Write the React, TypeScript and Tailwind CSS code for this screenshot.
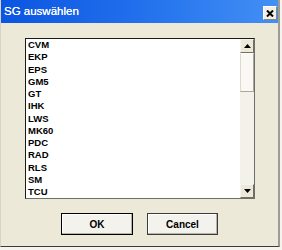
const items = ['CVM', 'EKP', 'EPS', 'GM5', 'GT', 'IHK', 'LWS', 'MK60', 'PDC', 'RAD', 'RLS', 'SM', 'TCU'];

function Arrow({ up }: { up?: boolean }) {
  return (
    <svg width="7" height="4" viewBox="0 0 7 4" className="block">
      <path d={up ? 'M3.5 0 L7 4 L0 4 Z' : 'M0 0 L7 0 L3.5 4 Z'} fill="#000" />
    </svg>
  );
}

function ScrollButton({ up }: { up?: boolean }) {
  return (
    <div className="h-[14px] w-full flex items-center justify-center bg-[#ece9d8] border border-t-[#f4f3ee] border-l-[#f4f3ee] border-r-[#716f64] border-b-[#716f64]">
      <Arrow up={up} />
    </div>
  );
}

function Button({ label, primary }: { label: string; primary?: boolean }) {
  return (
    <button
      className={
        'h-[22px] flex items-center justify-center bg-[#f3f2ec] text-black font-bold text-[10px] shadow-[inset_-1px_-1px_0_#b5b3a8,inset_1px_1px_0_#ffffff] border ' +
        (primary ? 'w-[72px] border-black' : 'w-[71px] border-[#3c3c3c]')
      }
    >
      {label}
    </button>
  );
}

export default function App() {
  return (
    <div className="w-[282px] h-[250px] bg-[#f4f3ee] font-['Liberation_Sans',Arial,sans-serif]">
      <div className="w-[280px] h-[247px] flex flex-col bg-[#ece9d8] border-l border-l-[#d8d4c4] border-r-2 border-r-[#9d9b92] border-b border-b-[#3c3c3c]">
        <div className="h-[23px] flex items-start justify-between bg-gradient-to-r from-[#0a55e2] via-[#2270ec] to-[#428ff5]">
          <span className="pl-[3px] pt-[5px] text-white text-[11.5px] leading-[12px] [text-shadow:0_0_0.4px_#fff]">SG auswählen</span>
          <div className="mt-[6px] mr-[1px] w-[14px] h-[14px] flex items-center justify-center bg-[#f1efe6] border border-[#ffffff] border-r-[#8a887e] border-b-[#8a887e]">
            <svg width="8" height="7" viewBox="0 0 8 7">
              <path d="M1 0.5 L7 6.5 M7 0.5 L1 6.5" stroke="#000" strokeWidth="2" />
            </svg>
          </div>
        </div>

        <div className="mt-[15px] ml-[24px] w-[230px] h-[161px] flex bg-white border border-t-[#1a1a1a] border-l-[#1a1a1a] border-r-[#6e6e6a] border-b-[#6e6e6a]">
          <ul className="flex-1 pl-[2px] text-[9.5px] font-bold text-black leading-[12.25px]">
            {items.map((it) => (
              <li key={it}>{it}</li>
            ))}
          </ul>
          <div className="w-[14px] flex flex-col bg-[#f6f5f0]">
            <ScrollButton up />
            <div className="h-[39px] bg-[#f9f8f4] border border-t-[#ffffff] border-l-[#dcdad0] border-r-[#a9a79c] border-b-[#a9a79c]" />
            <div className="flex-1 bg-[#f3f2ea]" />
            <ScrollButton />
          </div>
        </div>

        <div className="mt-[14px] flex justify-center gap-[14px]">
          <Button label="OK" primary />
          <Button label="Cancel" />
        </div>
      </div>
    </div>
  );
}
